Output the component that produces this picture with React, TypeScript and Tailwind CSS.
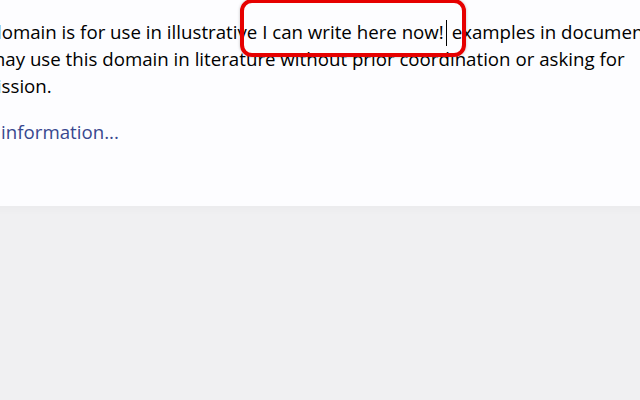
import React from "react";

export default function App() {
  return (
    <div className="h-[400px] w-[640px] overflow-hidden bg-[#f0f0f2] font-['Open_Sans',sans-serif] text-[18.7px] leading-[26.6px] text-black">
      <div className="-ml-[90px] w-[830px] rounded-b-[10px] bg-[#fdfdff] px-[40px] pt-[19px] pb-[40px] shadow-[2px_3px_7px_2px_rgba(0,0,0,0.02)]">
        <p className="whitespace-nowrap">
          This domain is for use in illustrative{" "}
          <span className="relative">
            I can write here now!
            <span className="ml-[2px] inline-block h-[26px] w-px bg-black align-[-7px]" />
            <span className="pointer-events-none absolute -top-[20px] -bottom-[13px] -left-[22px] -right-[19px] rounded-[12px] border-4 border-[#e60000] shadow-[0_0_3px_rgba(0,0,0,0.25)]" />
          </span>{" "}
          examples in documents.
          <br />
          You may use this domain in literature without prior coordination or asking for
          <br />
          permission.
        </p>
        <p className="mt-[20px] mb-[20px]">
          <a className="text-[#38488f] no-underline">More information...</a>
        </p>
      </div>
    </div>
  );
}
